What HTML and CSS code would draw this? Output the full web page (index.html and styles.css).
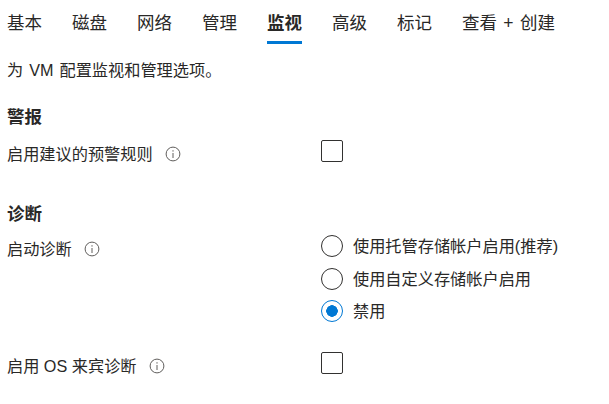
FILE: index.html
```html
<!doctype html>
<html lang="zh">
  <head>
    <meta charset="utf-8">
    <title>监视</title>
    <link rel="stylesheet" href="styles.css">
  </head>
  <body>
    <nav class="tabs">
      <a class="tab">基本</a>
      <a class="tab">磁盘</a>
      <a class="tab">网络</a>
      <a class="tab">管理</a>
      <a class="tab active">监视</a>
      <a class="tab">高级</a>
      <a class="tab">标记</a>
      <a class="tab">查看 + 创建</a>
    </nav>

    <p class="intro">为 VM 配置监视和管理选项。</p>

    <h2 class="heading">警报</h2>
    <div class="row">
      <div class="label">启用建议的预警规则
        <svg class="info" viewBox="0 0 16 16"><circle cx="8" cy="8" r="6.9"/><path d="M8 7v5M8 4.2v1.4"/></svg>
      </div>
      <div class="field"><span class="check"></span></div>
    </div>

    <h2 class="heading second">诊断</h2>
    <div class="row options-row">
      <div class="label">启动诊断
        <svg class="info" viewBox="0 0 16 16"><circle cx="8" cy="8" r="6.9"/><path d="M8 7v5M8 4.2v1.4"/></svg>
      </div>
      <div class="field options">
        <div class="option"><span class="radio"></span>使用托管存储帐户启用(推荐)</div>
        <div class="option"><span class="radio"></span>使用自定义存储帐户启用</div>
        <div class="option"><span class="radio on"></span>禁用</div>
      </div>
    </div>

    <div class="row last">
      <div class="label">启用 OS 来宾诊断
        <svg class="info" viewBox="0 0 16 16"><circle cx="8" cy="8" r="6.9"/><path d="M8 7v5M8 4.2v1.4"/></svg>
      </div>
      <div class="field"><span class="check"></span></div>
    </div>
  </body>
</html>
```

FILE: styles.css
```css
* {
  box-sizing: border-box;
}
html, body {
  height: 100%;
  overflow: hidden;
}
body {
  margin: 0;
  padding: 0 7px;
  background: #fff;
  color: #292827;
  font-family: "Liberation Sans", "Noto Sans CJK SC", sans-serif;
  font-size: 16.2px;
}
.tabs {
  display: flex;
  gap: 30px;
  height: 44px;
}
.tab {
  padding-top: 11px;
  height: 44px;
  font-size: 17.5px;
  line-height: 24px;
  word-spacing: 1.5px;
}
.tab.active {
  font-weight: bold;
  border-bottom: 3px solid #0078d4;
}
.intro {
  margin: 15px 0 0;
  line-height: 22px;
  word-spacing: 1.5px;
}
.heading {
  margin: 24px 0 0;
  font-size: 17.5px;
  line-height: 24px;
  font-weight: bold;
}
.heading.second {
  margin-top: 37px;
}
.row {
  display: flex;
  margin-top: 11px;
}
.row.options-row {
  margin-top: 9px;
}
.row.last {
  margin-top: 30px;
}
.label {
  display: flex;
  align-items: center;
  gap: 12px;
  width: 314px;
  height: 25px;
  padding-top: 3px;
  line-height: 22px;
}
.info {
  width: 16px;
  height: 16px;
  fill: none;
  stroke: #605e5c;
  stroke-width: 1;
}
.check {
  display: block;
  width: 22px;
  height: 22px;
  border: 1px solid #323130;
  border-radius: 2px;
}
.options {
  display: flex;
  flex-direction: column;
  gap: 10.5px;
}
.option {
  display: flex;
  align-items: center;
  gap: 10px;
  height: 22px;
  line-height: 22px;
}
.radio {
  width: 22px;
  height: 22px;
  border: 1px solid #323130;
  border-radius: 50%;
}
.radio.on {
  border-color: #0078d4;
  background: radial-gradient(circle, #0078d4 0 5.5px, #fff 6px);
}
```
